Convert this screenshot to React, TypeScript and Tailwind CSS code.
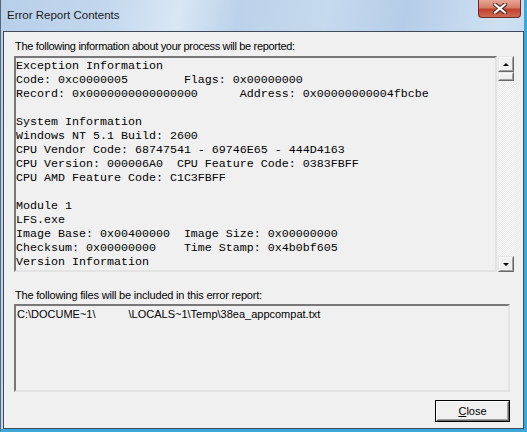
import React from 'react';

const reportLines: string[] = [
    'Exception Information',
    'Code: 0xc0000005        Flags: 0x00000000',
    'Record: 0x0000000000000000      Address: 0x00000000004fbcbe',
    '',
    'System Information',
    'Windows NT 5.1 Build: 2600',
    'CPU Vendor Code: 68747541 - 69746E65 - 444D4163',
    'CPU Version: 000006A0  CPU Feature Code: 0383FBFF',
    'CPU AMD Feature Code: C1C3FBFF',
    '',
    'Module 1',
    'LFS.exe',
    'Image Base: 0x00400000  Image Size: 0x00000000',
    'Checksum: 0x00000000    Time Stamp: 0x4b0bf605',
    'Version Information',
];

const ScrollButton: React.FC<{ dir: 'up' | 'down' }> = ({ dir }) => (
    <div className="h-[16px] w-[16px] border border-t-[#e3e3e3] border-l-[#e3e3e3] border-r-[#696969] border-b-[#696969] bg-[#f0f0f0]">
        <div className="h-full w-full border border-t-white border-l-white border-r-[#a0a0a0] border-b-[#a0a0a0] flex items-center justify-center">
            {dir === 'up' ? (
                <div className="w-0 h-0 border-l-[3px] border-r-[3px] border-b-[3px] border-l-transparent border-r-transparent border-b-black" />
            ) : (
                <div className="w-0 h-0 border-l-[3px] border-r-[3px] border-t-[3px] border-l-transparent border-r-transparent border-t-black" />
            )}
        </div>
    </div>
);

const App: React.FC = () => {
    return (
        <div className="w-[527px] h-[432px] flex flex-col border-l border-l-[#55667a] border-r-[3px] border-r-[#3aa9d9] border-b-[3px] border-b-[#3aa9d9] bg-[linear-gradient(100deg,#b7cfe9_0%,#c3d8ee_18%,#d9e7f5_30%,#bcd2ea_40%,#c6daee_55%,#b5cde8_68%,#cfe0f2_84%,#b9d0ea_100%)]">
            {/* title bar */}
            <div className="h-[31px] flex items-start justify-between shrink-0">
                <span className="pl-[6px] pt-[7px] text-[11.5px] leading-[16px] text-[#1b1b1b] font-['Liberation_Sans',Arial,sans-serif]">
                    Error Report Contents
                </span>
                <div className="mr-[3px] w-[43px] h-[18px] rounded-b-[4px] border border-t-0 border-[#6a2c24] bg-[linear-gradient(180deg,#e8a796_0%,#d77b68_45%,#c2412f_55%,#d06a52_100%)] flex items-center justify-center">
                    <svg width="14" height="11" viewBox="0 0 14 11">
                        <path d="M2 1.5 L12 9.5 M12 1.5 L2 9.5" stroke="#4a2420" strokeWidth="4.2" strokeLinecap="square" />
                        <path d="M2 1.5 L12 9.5 M12 1.5 L2 9.5" stroke="#ffffff" strokeWidth="2.2" strokeLinecap="square" />
                    </svg>
                </div>
            </div>

            {/* client area */}
            <div className="ml-[2px] w-[521px] h-[398px] border border-[#3d4b5c] bg-[#f0f0f0] pl-[10px] pt-[8px] flex flex-col font-['Liberation_Sans',Arial,sans-serif] text-[11px] text-black">
                <div className="h-[13px] leading-[13px] pl-[1px] tracking-[-0.32px]">
                    The following information about your process will be reported:
                </div>
                <div className="mt-[3px] flex h-[216px]">
                    <div className="w-[483px] h-full border-2 border-t-[#777777] border-l-[#777777] border-r-[#e3e3e3] border-b-[#e3e3e3] pt-[1px] overflow-hidden font-['Liberation_Mono','Courier_New',monospace] text-[11.67px] leading-[14px] whitespace-pre">
                        {reportLines.map((line, i) => (
                            <div key={i} className="h-[14px]">{line}</div>
                        ))}
                    </div>
                    <div className="ml-[1px] w-[16px] h-full flex flex-col">
                        <ScrollButton dir="up" />
                        <div className="h-[9px] w-[16px] border border-t-[#e3e3e3] border-l-[#e3e3e3] border-r-[#696969] border-b-[#696969] bg-[#f0f0f0]">
                            <div className="h-full w-full border border-t-white border-l-white border-r-[#a0a0a0] border-b-[#a0a0a0]" />
                        </div>
                        <div className="flex-1 bg-[repeating-conic-gradient(#ffffff_0_25%,#e8e8e8_0_50%)] bg-[length:2px_2px]" />
                        <ScrollButton dir="down" />
                    </div>
                </div>

                <div className="mt-[17px] h-[13px] leading-[13px] pl-[1px] tracking-[-0.19px]">
                    The following files will be included in this error report:
                </div>
                <div className="mt-[2px] w-[496px] h-[88px] border-2 border-t-[#777777] border-l-[#777777] border-r-[#e3e3e3] border-b-[#e3e3e3] pt-[2px] pl-[1px] leading-[13px]">
                    <span>{'C:\\DOCUME~1\\'}</span>
                    <span className="ml-[33px]">{'\\LOCALS~1\\Temp\\38ea_appcompat.txt'}</span>
                </div>

                <div className="mt-[8px] flex justify-end pr-[13px]">
                    <button className="w-[75px] h-[22px] border border-black bg-[#f0f0f0] p-0">
                        <div className="h-full w-full border border-t-white border-l-white border-r-[#696969] border-b-[#696969]">
                            <div className="h-full w-full border border-t-[#f0f0f0] border-l-[#f0f0f0] border-r-[#a0a0a0] border-b-[#a0a0a0] flex items-center justify-center leading-[13px]">
                                <span><span className="underline">C</span>lose</span>
                            </div>
                        </div>
                    </button>
                </div>
            </div>
        </div>
    );
};

export default App;
